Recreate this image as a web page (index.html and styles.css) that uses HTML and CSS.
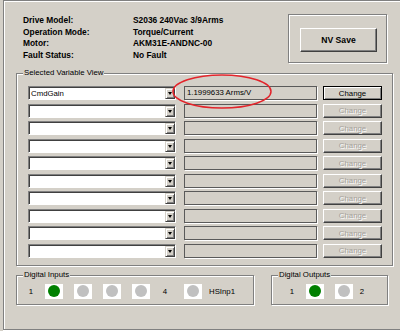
FILE: index.html
```html
<!DOCTYPE html>
<html>
<head>
<meta charset="utf-8">
<link rel="stylesheet" href="styles.css">
</head>
<body>
<div class="frame">
  <div class="header">
    <div class="info">
      <span>Drive Model:</span><span>S2036 240Vac 3/9Arms</span>
      <span>Operation Mode:</span><span>Torque/Current</span>
      <span>Motor:</span><span>AKM31E-ANDNC-00</span>
      <span>Fault Status:</span><span>No Fault</span>
    </div>
    <div class="nvgroup"><div class="btn nv">NV Save</div></div>
  </div>

  <div class="group vars">
    <span class="legend">Selected Variable View</span>
    <div class="row">
      <div class="combo"><span class="ctext">CmdGain</span><span class="drop"><i class="tri"></i></span></div>
      <div class="field">1.1999633 Arms/V</div>
      <div class="btn change default">Change</div>
    </div>
    <div class="row">
      <div class="combo"><span class="ctext"></span><span class="drop"><i class="tri"></i></span></div>
      <div class="field"></div>
      <div class="btn change disabled">Change</div>
    </div>
    <div class="row">
      <div class="combo"><span class="ctext"></span><span class="drop"><i class="tri"></i></span></div>
      <div class="field"></div>
      <div class="btn change disabled">Change</div>
    </div>
    <div class="row">
      <div class="combo"><span class="ctext"></span><span class="drop"><i class="tri"></i></span></div>
      <div class="field"></div>
      <div class="btn change disabled">Change</div>
    </div>
    <div class="row">
      <div class="combo"><span class="ctext"></span><span class="drop"><i class="tri"></i></span></div>
      <div class="field"></div>
      <div class="btn change disabled">Change</div>
    </div>
    <div class="row">
      <div class="combo"><span class="ctext"></span><span class="drop"><i class="tri"></i></span></div>
      <div class="field"></div>
      <div class="btn change disabled">Change</div>
    </div>
    <div class="row">
      <div class="combo"><span class="ctext"></span><span class="drop"><i class="tri"></i></span></div>
      <div class="field"></div>
      <div class="btn change disabled">Change</div>
    </div>
    <div class="row">
      <div class="combo"><span class="ctext"></span><span class="drop"><i class="tri"></i></span></div>
      <div class="field"></div>
      <div class="btn change disabled">Change</div>
    </div>
    <div class="row">
      <div class="combo"><span class="ctext"></span><span class="drop"><i class="tri"></i></span></div>
      <div class="field"></div>
      <div class="btn change disabled">Change</div>
    </div>
    <div class="row">
      <div class="combo"><span class="ctext"></span><span class="drop"><i class="tri"></i></span></div>
      <div class="field"></div>
      <div class="btn change disabled">Change</div>
    </div>
  </div>

  <div class="digital">
    <div class="group di">
      <span class="legend">Digital Inputs</span>
      <span class="num n1">1</span>
      <span class="led l1"><i class="dot on"></i></span>
      <span class="led"><i class="dot"></i></span>
      <span class="led"><i class="dot"></i></span>
      <span class="led"><i class="dot"></i></span>
      <span class="num n4">4</span>
      <span class="led l5"><i class="dot"></i></span>
      <span class="name">HSInp1</span>
    </div>
    <div class="group do">
      <span class="legend">Digital Outputs</span>
      <span class="num o1">1</span>
      <span class="led ol1"><i class="dot on"></i></span>
      <span class="led"><i class="dot"></i></span>
      <span class="num o2">2</span>
    </div>
  </div>
</div>

<svg class="annot" width="104" height="40" viewBox="0 0 104 40">
  <ellipse cx="52" cy="19.5" rx="49" ry="16.5" fill="none" stroke="#e3242b" stroke-width="1.5"/>
</svg>
</body>
</html>
```

FILE: styles.css
```css
html, body {
  margin: 0;
  padding: 0;
}
body {
  width: 400px;
  height: 331px;
  overflow: hidden;
  background: #d4d0c8;
  font-family: "Liberation Sans", Arial, sans-serif;
  font-size: 7.8px;
  color: #000;
  position: relative;
}
.frame {
  margin-left: 3px;
  width: 397px;
  height: 330px;
  box-sizing: border-box;
  border-top: 1px solid #808080;
  border-left: 1px solid #808080;
  border-bottom: 1px solid #808080;
  box-shadow: inset 1px 1px 0 #fff, 0 1px 0 #fff;
}

/* header */
.header {
  display: flex;
  height: 62px;
}
.info {
  margin-left: 19px;
  margin-top: 14px;
  display: grid;
  grid-template-columns: 110px auto;
  grid-auto-rows: 11.7px;
  line-height: 11.7px;
  font-weight: bold;
  font-size: 8.4px;
  align-content: start;
}
.nvgroup {
  margin-left: auto;
  margin-right: 13px;
  margin-top: 13px;
  width: 99px;
  height: 49px;
  box-sizing: border-box;
  border: 1px solid #808080;
  box-shadow: inset 1px 1px 0 #fff, 1px 1px 0 #fff;
  padding: 13px 0 0 11px;
}

/* buttons */
.btn {
  box-sizing: border-box;
  display: flex;
  align-items: center;
  justify-content: center;
  background: #d4d0c8;
  border: 1px solid;
  border-color: #fff #404040 #404040 #fff;
  box-shadow: inset -1px -1px 0 #808080;
}
.nv {
  width: 77px;
  height: 24px;
  font-weight: bold;
  font-size: 8.6px;
}
.change {
  width: 59px;
  height: 15px;
}
.change.default {
  border-color: #000;
  box-shadow: inset 1px 1px 0 #fff, inset -1px -1px 0 #808080;
}
.change.disabled {
  color: #a4a19b;
  text-shadow: 1px 1px 0 #fff;
}

/* group boxes */
.group {
  position: relative;
  box-sizing: border-box;
  border: 1px solid #808080;
  box-shadow: inset 1px 1px 0 #fff, 1px 1px 0 #fff;
}
.legend {
  position: absolute;
  top: -6px;
  left: 6px;
  padding: 0 1px;
  line-height: 10px;
  background: #d4d0c8;
}
.vars {
  margin-top: 10px;
  margin-left: 12px;
  width: 377px;
  height: 193px;
  padding: 12px 0 0 11px;
  display: flex;
  flex-direction: column;
  gap: 3.5px;
}
.row {
  display: flex;
  height: 14px;
  align-items: stretch;
}
.combo {
  width: 148px;
  box-sizing: border-box;
  background: #fff;
  border: 1px solid;
  border-color: #808080 #fff #fff #808080;
  box-shadow: inset 1px 1px 0 #404040;
  display: flex;
  padding: 1px 0 0 1px;
}
.ctext {
  flex: 1;
  padding-left: 1px;
  line-height: 11px;
}
.drop {
  width: 10px;
  box-sizing: border-box;
  background: #d4d0c8;
  border: 1px solid;
  border-color: #d4d0c8 #404040 #404040 #d4d0c8;
  box-shadow: inset 1px 1px 0 #fff, inset -1px -1px 0 #808080;
  display: flex;
  align-items: center;
  justify-content: center;
}
.tri {
  width: 0;
  height: 0;
  border-left: 2.5px solid transparent;
  border-right: 2.5px solid transparent;
  border-top: 3px solid #000;
}
.field {
  width: 133px;
  margin-left: 8px;
  box-sizing: border-box;
  border: 1px solid #5a5a5a;
  box-shadow: 1px 1px 0 #fff;
  padding-left: 2px;
  line-height: 12px;
}
.change {
  margin-left: 6px;
  height: 14px;
}

/* digital */
.digital {
  display: flex;
  margin-top: 9px;
  margin-left: 12px;
}
.di, .do {
  height: 30px;
  display: flex;
  align-items: center;
  padding-top: 2px;
}
.di {
  width: 238px;
}
.do {
  width: 117px;
  margin-left: 17px;
}
.num {
  width: 8px;
  text-align: center;
}
.led {
  width: 18px;
  height: 15px;
  background: #fff;
  display: flex;
  align-items: center;
  justify-content: center;
  margin-left: 11px;
}
.dot {
  width: 12px;
  height: 12px;
  border-radius: 50%;
  background: #c0c0c0;
}
.dot.on {
  background: #008000;
}
.n1 { margin-left: 10px; }
.led.l1 { margin-left: 10px; }
.n4 { margin-left: 11px; }
.led.l5 { margin-left: 15px; }
.name { margin-left: 7px; }
.o1 { margin-left: 16px; }
.led.ol1 { margin-left: 10px; }
.o2 { margin-left: 5px; }

.annot {
  position: absolute;
  left: 170px;
  top: 72px;
}
```
